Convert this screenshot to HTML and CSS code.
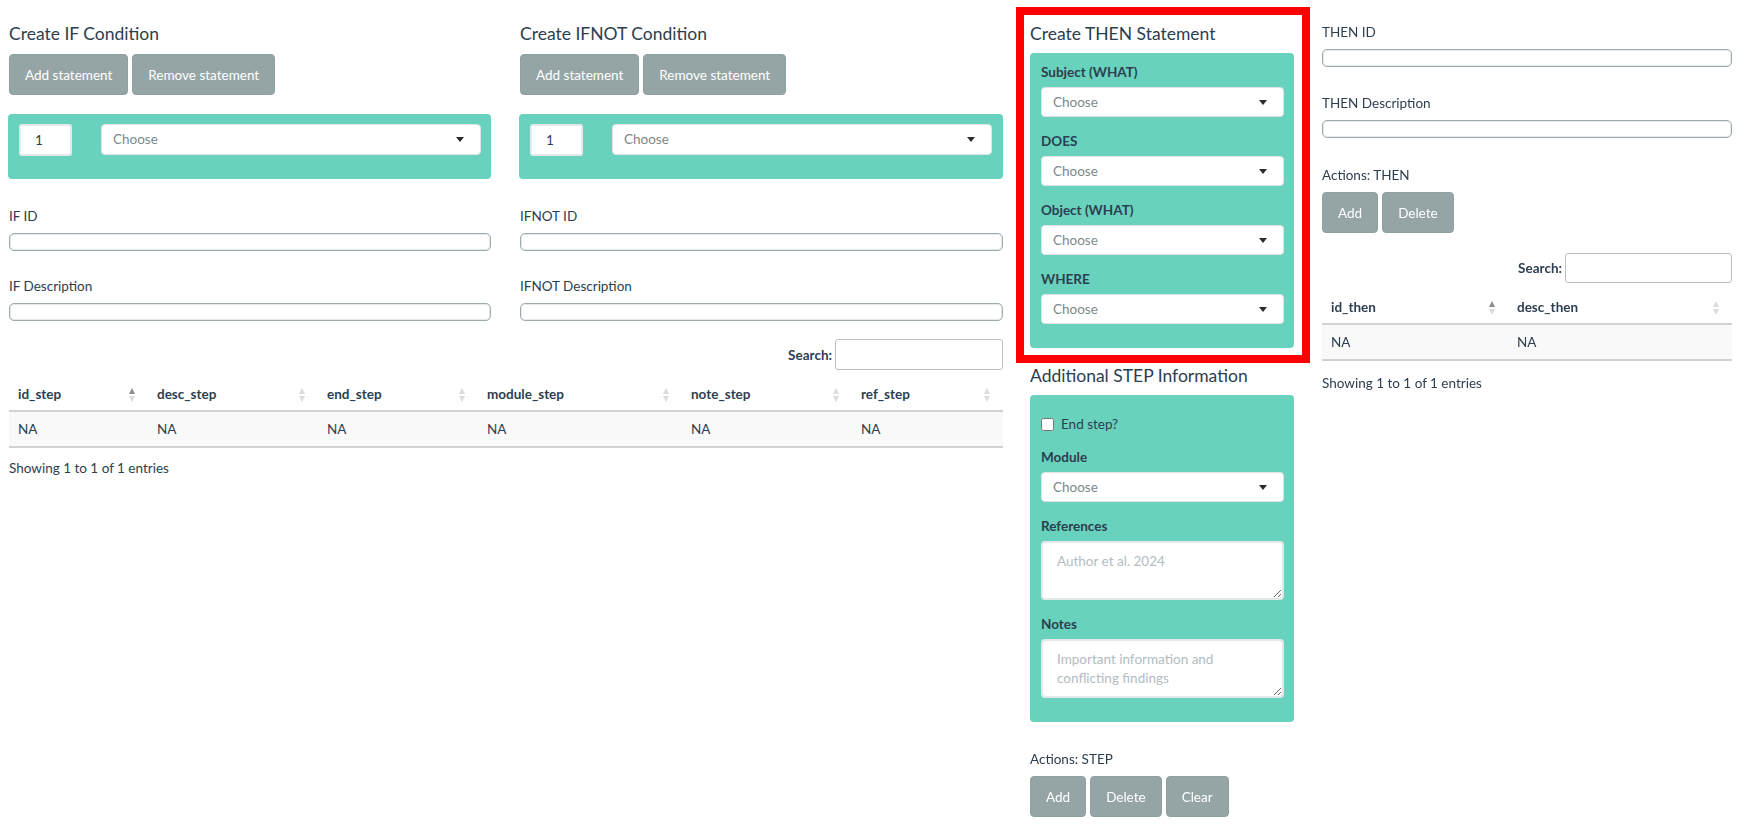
FILE: index.html
```html
<!DOCTYPE html>
<html>
<head>
<meta charset="utf-8">
<title>Steps</title>
<link rel="stylesheet" href="styles.css">
</head>
<body>
<div class="page">
  <div class="left">
    <div class="cond-row">
      <div class="cond-col">
        <h4 class="title">Create IF Condition</h4>
        <div class="btn-row">
          <button class="btn">Add statement</button>
          <button class="btn">Remove statement</button>
        </div>
        <div class="well well-cond">
          <div class="num-input">1</div>
          <div class="select select-wide"><span>Choose</span><i class="caret"></i></div>
        </div>
        <label class="lbl">IF ID</label>
        <div class="thin-input"></div>
        <label class="lbl">IF Description</label>
        <div class="thin-input"></div>
      </div>
      <div class="cond-col">
        <h4 class="title">Create IFNOT Condition</h4>
        <div class="btn-row">
          <button class="btn">Add statement</button>
          <button class="btn">Remove statement</button>
        </div>
        <div class="well well-cond">
          <div class="num-input">1</div>
          <div class="select select-wide"><span>Choose</span><i class="caret"></i></div>
        </div>
        <label class="lbl">IFNOT ID</label>
        <div class="thin-input"></div>
        <label class="lbl">IFNOT Description</label>
        <div class="thin-input"></div>
      </div>
    </div>
    <div class="dt dt-step">
      <div class="dt-search"><span>Search:</span><div class="search-box"></div></div>
      <table class="dt-table">
        <colgroup>
          <col class="w139"><col class="w170"><col class="w160"><col class="w204"><col class="w170"><col class="w151">
        </colgroup>
        <thead>
          <tr>
            <th>id_step<span class="sort asc"></span></th>
            <th>desc_step<span class="sort"></span></th>
            <th>end_step<span class="sort"></span></th>
            <th>module_step<span class="sort"></span></th>
            <th>note_step<span class="sort"></span></th>
            <th>ref_step<span class="sort"></span></th>
          </tr>
        </thead>
        <tbody>
          <tr><td>NA</td><td>NA</td><td>NA</td><td>NA</td><td>NA</td><td>NA</td></tr>
        </tbody>
      </table>
      <div class="dt-info">Showing 1 to 1 of 1 entries</div>
    </div>
  </div>

  <div class="then-col">
    <div class="highlight">
      <h4 class="title">Create THEN Statement</h4>
      <div class="well well-form">
        <label class="blbl">Subject (WHAT)</label>
        <div class="select"><span>Choose</span><i class="caret"></i></div>
        <label class="blbl">DOES</label>
        <div class="select"><span>Choose</span><i class="caret"></i></div>
        <label class="blbl">Object (WHAT)</label>
        <div class="select"><span>Choose</span><i class="caret"></i></div>
        <label class="blbl">WHERE</label>
        <div class="select"><span>Choose</span><i class="caret"></i></div>
      </div>
    </div>
    <div class="step-section">
      <h4 class="title">Additional STEP Information</h4>
      <div class="well well-form well-step">
        <label class="check"><input type="checkbox"> End step?</label>
        <label class="blbl">Module</label>
        <div class="select"><span>Choose</span><i class="caret"></i></div>
        <label class="blbl">References</label>
        <textarea class="ta" placeholder="Author et al. 2024"></textarea>
        <label class="blbl">Notes</label>
        <textarea class="ta" placeholder="Important information and conflicting findings"></textarea>
      </div>
      <div class="actions-lbl">Actions: STEP</div>
      <div class="btn-row">
        <button class="btn">Add</button>
        <button class="btn">Delete</button>
        <button class="btn">Clear</button>
      </div>
    </div>
  </div>

  <div class="right-col">
    <label class="lbl lbl-first">THEN ID</label>
    <div class="thin-input"></div>
    <label class="lbl">THEN Description</label>
    <div class="thin-input"></div>
    <div class="actions-lbl actions-then">Actions: THEN</div>
    <div class="btn-row">
      <button class="btn">Add</button>
      <button class="btn">Delete</button>
    </div>
    <div class="dt dt-then">
      <div class="dt-search"><span>Search:</span><div class="search-box"></div></div>
      <table class="dt-table">
        <colgroup><col class="w186"><col class="w224"></colgroup>
        <thead>
          <tr>
            <th>id_then<span class="sort asc"></span></th>
            <th>desc_then<span class="sort"></span></th>
          </tr>
        </thead>
        <tbody>
          <tr><td>NA</td><td>NA</td></tr>
        </tbody>
      </table>
      <div class="dt-info">Showing 1 to 1 of 1 entries</div>
    </div>
  </div>
</div>
</body>
</html>
```

FILE: styles.css
```css
* { box-sizing: border-box; }
html, body { margin: 0; padding: 0; background: #fff; }
body {
  font-family: Lato, "Open Sans", "Liberation Sans", sans-serif;
  font-size: 13.5px;
  line-height: 20px;
  color: #2c3e50;
}
.page {
  display: flex;
  align-items: flex-start;
  padding-left: 9px;
}
.left { width: 994px; flex: none; }
.cond-row {
  display: grid;
  grid-template-columns: 482px 483px;
  column-gap: 29px;
}
.cond-col { padding-top: 23px; }
.title {
  margin: 0 0 9px 0;
  font-size: 17.5px;
  line-height: 22px;
  font-weight: 400;
  color: #2c3e50;
}
.btn-row { display: flex; gap: 4px; }
.btn {
  font-family: inherit;
  font-size: 13.5px;
  line-height: 20px;
  color: #fff;
  background: #95a5a6;
  border: 1px solid #8fa0a1;
  border-radius: 4px;
  padding: 10px 15px;
  height: 41px;
}
.well {
  background: #68d2bd;
  border-radius: 4px;
}
.well-cond {
  margin-top: 19px;
  margin-left: -1px;
  display: flex;
  align-items: flex-start;
  padding: 10px 10px 24px 11px;
  height: 65px;
}
.num-input {
  width: 53px;
  height: 32px;
  background: #fff;
  border: 2px solid #e3e8ea;
  border-radius: 3px;
  padding: 4px 14px;
  color: #2c3e50;
  flex: none;
}
.select {
  position: relative;
  height: 30px;
  background: #fff;
  border: 1px solid #dfe3e5;
  border-radius: 4px;
  padding: 4px 11px;
  color: #7b8a8b;
}
.select-wide { width: 380px; margin-left: 29px; height: 31px; }
.caret {
  position: absolute;
  right: 16px;
  top: 12px;
  width: 0; height: 0;
  border-left: 4px solid transparent;
  border-right: 4px solid transparent;
  border-top: 5px solid #2b2b2b;
}
.lbl { display: block; margin-top: 27px; }
.lbl + .thin-input { margin-top: 7px; }
.thin-input {
  height: 18px;
  border: 1px solid #9ea9ad;
  border-radius: 5px;
  background: #fff;
  box-shadow: inset 0 0 0 1px #e6eaec;
}
.cond-col .lbl + .thin-input + .lbl { margin-top: 25px; }

/* data tables */
.dt-search {
  display: flex;
  justify-content: flex-end;
  align-items: center;
  font-weight: 700;
  gap: 3px;
}
.dt-step .dt-search { margin-top: 18px; }
.search-box {
  width: 168px;
  height: 31px;
  border: 1px solid #b9bfc2;
  border-radius: 3px;
  background: #fff;
}
.dt-then .search-box { width: 167px; height: 30px; }
.dt-table {
  width: 100%;
  margin-top: 6px;
  border-collapse: collapse;
  table-layout: fixed;
}
.w139 { width: 139px; } .w170 { width: 170px; } .w160 { width: 160px; }
.w204 { width: 204px; } .w151 { width: 151px; }
.w186 { width: 186px; } .w224 { width: 224px; }
.dt-table th {
  position: relative;
  text-align: left;
  font-weight: 700;
  padding: 8px 10px 6px 9px;
  border-bottom: 2px solid #cfd2d3;
}
.dt-table td {
  padding: 7px 10px 7px 9px;
  background: #f9f9f9;
  border-bottom: 2px solid #cfd2d3;
}
.sort {
  position: absolute;
  right: 12px;
  top: 12px;
  width: 7px;
  height: 14px;
}
.sort::before, .sort::after {
  content: "";
  position: absolute;
  left: 0;
  width: 0; height: 0;
  border-left: 3.5px solid transparent;
  border-right: 3.5px solid transparent;
}
.sort::before { top: 0; border-bottom: 6px solid #dcdcdc; }
.sort::after { top: 8px; border-top: 6px solid #dcdcdc; }
.sort.asc::before { border-bottom-color: #8c8c8c; }
.dt-info { margin-top: 10px; }

/* THEN column */
.then-col {
  width: 294px;
  flex: none;
  margin-left: 13px;
}
.highlight {
  margin-top: 7px;
  border: 8px solid #ff0000;
  padding: 8px 8px 7px 6px;
}
.highlight .title { margin-bottom: 8px; }
.well-form {
  padding: 9px 10px 24px 11px;
  display: flex;
  flex-direction: column;
}
.blbl {
  display: block;
  font-weight: 700;
  margin-bottom: 5px;
}
.select + .blbl, .ta + .blbl { margin-top: 14px; }
.step-section { padding: 2px 16px 0 14px; }
.step-section .title { margin-bottom: 8px; }
.check {
  display: flex;
  align-items: center;
  margin: 10px 0 13px 0;
}
.check input {
  width: 13px; height: 13px;
  margin: 0 7px 0 0;
}
.ta {
  display: block;
  width: 243px;
  height: 59px;
  font-family: inherit;
  font-size: 13.5px;
  line-height: 19px;
  padding: 9px 14px;
  border: 2px solid #e3e8ea;
  border-radius: 4px;
  resize: vertical;
  color: #2c3e50;
}
.ta::placeholder { color: #b3bcc2; }
.actions-lbl { margin-top: 27px; margin-bottom: 7px; }

/* right column */
.right-col {
  width: 410px;
  flex: none;
  margin-left: 12px;
  padding-top: 22px;
}
.right-col .lbl-first { margin-top: 0; }
.right-col .lbl + .thin-input + .lbl { margin-top: 26px; }
.actions-then { margin-top: 27px; }
.dt-then .dt-search { margin-top: 20px; }
.dt-then .dt-info { margin-top: 12px; }
```
